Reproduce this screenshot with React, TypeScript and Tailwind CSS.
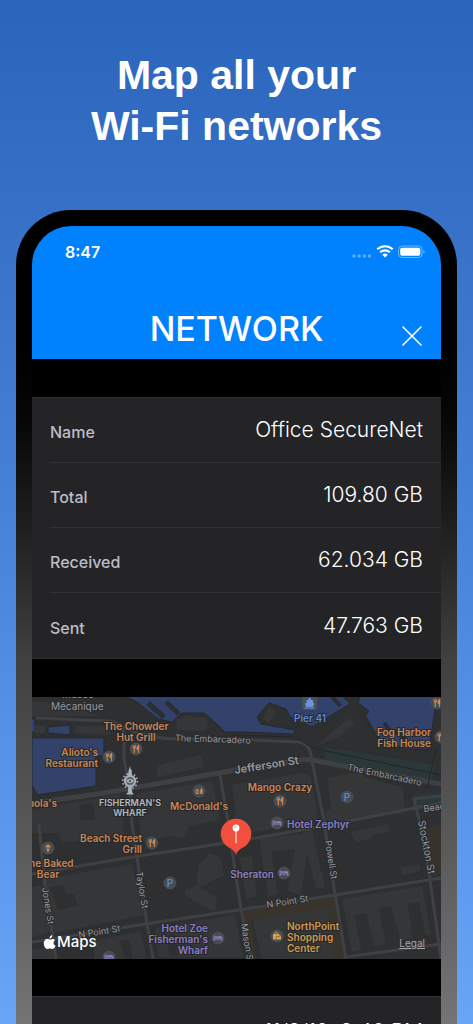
import { ReactNode } from 'react';

const rows = [
  { label: 'Name', value: 'Office SecureNet' },
  { label: 'Total', value: '109.80 GB' },
  { label: 'Received', value: '62.034 GB' },
  { label: 'Sent', value: '47.763 GB' },
];

type BadgeKind = 'food' | 'bed' | 'parking' | 'cone' | 'burger' | 'bag';

const badges: { kind: BadgeKind; x: number; y: number }[] = [
  { kind: 'food', x: 77, y: 60 },
  { kind: 'food', x: 104, y: 52 },
  { kind: 'burger', x: 167, y: 94 },
  { kind: 'food', x: 248, y: 104 },
  { kind: 'food', x: 405, y: 6 },
  { kind: 'food', x: 409, y: 40 },
  { kind: 'food', x: 120, y: 146 },
  { kind: 'cone', x: 16, y: 151 },
  { kind: 'parking', x: 315, y: 100 },
  { kind: 'parking', x: 138, y: 186 },
  { kind: 'bed', x: 245, y: 126 },
  { kind: 'bed', x: 252, y: 176 },
  { kind: 'bed', x: 186, y: 241 },
  { kind: 'bed', x: 77, y: 260 },
  { kind: 'bag', x: 245, y: 239 },
];

function BadgeGlyph({ kind }: { kind: BadgeKind }) {
  switch (kind) {
    case 'food':
      return (
        <g fill="none" stroke="#d08a56" strokeLinecap="round">
          <path d="M-2.9-3.6v2.4M-1.7-3.6v2.4M-.5-3.6v2.4" strokeWidth=".7" />
          <path d="M-2.9-1.4c0 1.4 2.4 1.4 2.4 0z" fill="#d08a56" strokeWidth=".5" />
          <path d="M-1.7-.6v4.2" strokeWidth="1.2" />
          <path d="M2.4-3.6v7.2M2.4-3.6c-1.4 1-1.6 2.6-1.4 4h1.4z" fill="#d08a56" strokeWidth="1" />
        </g>
      );
    case 'bed':
      return (
        <g fill="#8f80cc">
          <path d="M-4.4-2.8h1v3.3h6.9v-.9h.9v3.4h-1V1.600h-6.8V3h-1z" />
          <circle cx="-2" cy="-.9" r="1" />
          <path d="M-.6-1.800h3.400c.9 0 1.300.5 1.300 1.900h-4.700z" />
        </g>
      );
    case 'parking':
      return (
        <text y="4" textAnchor="middle" fontSize="10" fontWeight="600" fill="#5b86cf">P</text>
      );
    case 'cone':
      return (
        <g fill="#d08a56">
          <path d="M-2.600-.4a2.600 2.800 0 1 1 5.200 0z" />
          <path d="M-1.800.4h3.600L.3 4.200h-.6z" />
        </g>
      );
    case 'burger':
      return (
        <g fill="#d08a56">
          <path d="M-3.800-.2c0-2 4-2 4 0zM-3.900.4h4.200v.8h-4.200zM-3.800 1.700h4c0 .7-.4 1.200-1 1.200h-2c-.6 0-1-.5-1-1.200z" />
          <path d="M1-1.500h2.800L3.400 2.900h-2zM2.200-3.600h.7v2h-.7z" />
        </g>
      );
    case 'bag':
      return (
        <g>
          <path d="M-2.300-1.800c0-2.800 3.400-2.800 3.400 0" fill="none" stroke="#d9a04a" />
          <path d="M-4-1.900h6.400v1.500H4v4h-8z" fill="#d9a04a" />
          <path d="M-.8.600h4M-.8 3V.6" fill="none" stroke="#4b5256" strokeWidth=".6" />
        </g>
      );
  }
}

interface PoiProps {
  x: number;
  y: number;
  color: string;
  size?: number;
  children: ReactNode;
}

function Poi({ x, y, color, size = 10, children }: PoiProps) {
  return (
    <text x={x} y={y} fill={color} fontSize={size} fontWeight="600" stroke="#26282a" strokeWidth="2" paintOrder="stroke">
      {children}
    </text>
  );
}

const ORANGE = '#c98656';
const PURPLE = '#8a7dc4';
const BLUE = '#5f88d6';

function StreetMap() {
  return (
    <svg
      viewBox="0 0 409 262"
      preserveAspectRatio="xMidYMid slice"
      className="block w-full font-['Inter',sans-serif]"
      role="img"
      aria-label="Network location"
    >
      <rect width="409" height="262" fill="#2d2f31" />

      {/* water */}
      <g fill="#33426b" stroke="#26282b" strokeWidth="1">
        <path d="M90-2l15 7 21 17 14 3 10-9h22l14 12 7 7h17l52 2 1-4-34-6-4-7 12-14 17 6 4 8 22 10 38-23-9-9z" />
        <path d="M328-2l-2 8 11 8-5 7 13 19 28 12h24l6-40-2-14z" />
        <path d="M0 41h72v17l-8 2v29L5 98 0 88z" />
        <path d="M-1 21l4 2v12h-4zM16 30l22-2v10l-22-2z" />
      </g>
      {/* piers */}
      <g fill="none" stroke="#2b2d30" strokeWidth="5">
        <path d="M116 6l16 14M134 5l13 12" />
        <path d="M299-2l9 11M352 26l10 12M362 34l12 8M327 10l16 28" strokeWidth="4" />
      </g>

      {/* green strips along the embarcadero */}
      <path d="M293 50l110 18-4 19-106-21zM381 97l28-2v15l-28 4z" fill="#2b383a" />
      <path d="M395 130l14-3v48l-10 6z" fill="#38322c" />

      {/* building blocks */}
      <g fill="#353638">
        <path d="M3 28h10v8H3zM43 29h34l2 9-36-2zM0 4l44 6 24 9H0z" />
        <path d="M145 22l10-3 18 2 4 5-4 8-28-1zM125 68l44-10 3 12-46 10z" />
        <path d="M0 113l88-16 4 40-62 9-4-10H0zM104 97l76-13 8 39-30 6-6 12-14-2-28 6z" />
        <path d="M200 88l70-12q8 0 9 6l8 42-82 14z" />
        <path d="M296 81l34-7 1 6 40 10 2 26-78 10-2-12 6-2zM285 48l12-10 20-17 6 5-16 14-20 8z" />
        <path d="M231 22l6-12 7 4-6 12zM10 182l90-15 12 51-90 18zM0 190l8-2 10 47-18 5z" />
        <path d="M166 169l12-13 11 5 3 17-27 14zM153 193l12-5 20 13-2 15-30-18z" />
        <path d="M208 161l12-2 5 40-11 3zM228 141l43-4 5 13-7 48-14-4 8-42-33 4zM270 135l10-2 13 58-9 1z" />
        <path d="M228 148l10-1 8 50-10 3zM318 135l38-8 2 8-16 3-4 4-14 3zM369 171l18-4 2 7-19 4z" />
        <path d="M219 217l80-14 10 46-1 13h-78zM310 202l80-13 9 48-79 18zM0 253l20-4 3 13H0z" />
        <path d="M62 244l46-10 7 28H62zM123 231l80-13 8 42h-84z" />
      </g>
      <g fill="#2d2f31">
        <path d="M322 218l12-2 10 38-14 2zM347 211l12-2 10 35-15 3zM376 207l11-2 7 34-14 2z" />
        <path d="M18 190l14-2 2 9h8l3 12-19 4zM47 108l14-2 2 16-14 2zM134 238l9-1 3 22h-8zM88 244l9-2 4 20h-8z" />
      </g>
      <path d="M211 214l92-15 11 63H303l-8-52-76 13 5 39h-7z" fill="#38342b" />

      {/* streets */}
      <g fill="none" stroke="#3e4044" strokeLinecap="round">
        <path d="M5 21l72 3q14 2 15 14v24l6 31" strokeWidth="3" />
        <path d="M90 30q30 13 60 12h50l66 3q9 1 12 9l8 40 7 34" strokeWidth="3" />
        <path d="M0 106l66-9 144-25 60-9q10-1 20 2l119 22" strokeWidth="5" />
        <path d="M98 93l2 34 15 100 6 35M188 78l8 46 5 36 8 52 10 50M292 124l11 73 11 65" strokeWidth="3" />
        <path d="M0 177l107-18 93-14 93-16 94-19 22-4M0 245l113-18 94-14 96-15 106-17" strokeWidth="3" />
        <path d="M7 128l6 60 11 74M409 99l-27 3 6 25 10 55 11 80M313 260l96-13" strokeWidth="3" />
      </g>
      <path d="M200 38l62 2 22 12 125 26M404 52l-9 40" fill="none" stroke="#242628" strokeWidth="1" />

      {/* street names */}
      <g fill="#97999d" fontSize="9" stroke="#292b2d" strokeWidth="2" paintOrder="stroke">
        <text x="19" y="13" fontSize="10">Mécanique</text>
        <text x="30" y="1" fontSize="10">Musée</text>
        <text x="143" y="44" transform="rotate(2 143 44)">The Embarcadero</text>
        <text x="203" y="77" fontSize="11" fontWeight="600" transform="rotate(-9 203 77)">Jefferson St</text>
        <text x="315" y="73" transform="rotate(12 315 73)">The Embarcadero</text>
        <text x="392" y="115" transform="rotate(-8 392 115)">Beach St</text>
        <text x="47" y="241" transform="rotate(-9 47 241)">N Point St</text>
        <text x="235" y="211" transform="rotate(-9 235 211)">N Point St</text>
        <text x="10" y="191" transform="rotate(81 10 191)">Jones St</text>
        <text x="104" y="175" transform="rotate(81 104 175)">Taylor St</text>
        <text x="293" y="144" transform="rotate(81 293 144)">Powell St</text>
        <text x="386" y="124" fontSize="10" transform="rotate(79 386 124)">Stockton St</text>
        <text x="209" y="227" transform="rotate(81 209 227)">Mason St</text>
      </g>

      {/* places */}
      {badges.map((b) => (
        <g key={`${b.x}-${b.y}`} transform={`translate(${b.x} ${b.y})`}>
          <circle r="6.500" fill="#474d51" />
          <BadgeGlyph kind={b.kind} />
        </g>
      ))}
      <g textAnchor="middle">
        <Poi x={104} y={33} color={ORANGE}>The Chowder</Poi>
        <Poi x={104} y={44} color={ORANGE}>Hut Grill</Poi>
        <Poi x={167} y={113} color={ORANGE}>McDonald's</Poi>
        <Poi x={248} y={94} color={ORANGE}>Mango Crazy</Poi>
        <Poi x={16} y={170} color={ORANGE}>The Baked</Poi>
        <Poi x={16} y={181} color={ORANGE}>Bear</Poi>
        <Poi x={278} y={25} color={BLUE}>Pier 41</Poi>
        <Poi x={98} y={109} color="#b4b9c0" size={9}>FISHERMAN'S</Poi>
        <Poi x={98} y={119} color="#b4b9c0" size={9}>WHARF</Poi>
      </g>
      <g textAnchor="end">
        <Poi x={66} y={59} color={ORANGE}>Alioto's</Poi>
        <Poi x={66} y={70} color={ORANGE}>Restaurant</Poi>
        <Poi x={25} y={110} color={ORANGE}>nola's</Poi>
        <Poi x={399} y={39} color={ORANGE}>Fog Harbor</Poi>
        <Poi x={399} y={50} color={ORANGE}>Fish House</Poi>
        <Poi x={110} y={145} color={ORANGE}>Beach Street</Poi>
        <Poi x={110} y={156} color={ORANGE}>Grill</Poi>
        <Poi x={242} y={181} color={PURPLE}>Sheraton</Poi>
        <Poi x={176} y={235} color={PURPLE}>Hotel Zoe</Poi>
        <Poi x={176} y={246} color={PURPLE}>Fisherman's</Poi>
        <Poi x={176} y={257} color={PURPLE}>Wharf</Poi>
      </g>
      <Poi x={255} y={131} color={PURPLE}>Hotel Zephyr</Poi>
      <Poi x={255} y={233} color="#cf9a4c">NorthPoint</Poi>
      <Poi x={255} y={244} color="#cf9a4c">Shopping</Poi>
      <Poi x={255} y={255} color="#cf9a4c">Center</Poi>

      {/* ferry */}
      <rect x="270" y="-3" width="15" height="16" rx="3" fill="#475157" />
      <path d="M276.500 1h2.500v2h2v3l1.500.6-1.500 3.400h-6.800l-1.500-3.400 1.800-.6V3h2zM272.500 10.500h10v1h-10z" fill="#6a93dd" />

      {/* wharf wheel */}
      <g transform="translate(98 84)" fill="#a8afb7">
        <circle r="7.400" fill="none" stroke="#a8afb7" strokeWidth="1.600" strokeDasharray="1.600 2.270" />
        <circle r="6.200" />
        <circle r="3.900" fill="#5b6168" />
        <ellipse rx="3.300" ry="1.900" />
        <circle r=".9" fill="#33363a" />
        <path d="M-2-6l.6-4.500L0-15l.7 3.500h.9L2-6zM-1.600 6h3.200l.8 6h1v1.500h-6.800V12h1z" />
      </g>

      {/* pin */}
      <path d="M204 158c-1-4-4-6-8-8a15.300 15.300 0 1 1 16 0c-4 2-7 4-8 8z" fill="#f24f3e" />
      <path d="M203.500 134h1v11.500l-.5 1.200-.5-1.200z" fill="#fff" />
      <circle cx="204" cy="131" r="3.400" fill="#fff" />
      <circle cx="203" cy="130" r=".9" fill="#f8a79e" />

      {/* attribution */}
      <g fill="#fff">
        <path d="M22 247.500c-.9-1.300-.6-3.400 1.100-4.300-.9-1.200-2.500-1.400-3.600-.9-1.300.5-1.500.5-2.700 0-2.800-1-5.300 1.400-5 4.600.2 2.200 1.900 5.100 3.500 5.100 1 0 1.500-.6 2.700-.6s1.600.6 2.700.6c1.400 0 2.500-2 2.900-3.200-.6-.2-1.300-.7-1.600-1.300zM20.200 238c-1.600.3-2.800 1.900-2.600 3.500 1.500 0 2.800-1.700 2.600-3.500z" />
        <text x="25" y="250" fontSize="15" fontWeight="500">Maps</text>
      </g>
    </svg>
  );
}

function StatusBar() {
  return (
    <div className="flex items-center justify-between pt-4 pr-4 pl-[33px]">
      <span className="text-[16px] leading-5 font-semibold">8:47</span>
      <svg width="74" height="16" viewBox="0 0 74 16" aria-hidden="true">
        <g fill="#5aaeff">
          <circle cx="3" cy="12" r="1.700" />
          <circle cx="8.200" cy="12" r="1.700" />
          <circle cx="13.300" cy="12" r="1.700" />
          <circle cx="18.500" cy="12" r="1.700" />
        </g>
        <g fill="none" stroke="#fff" strokeWidth="2.200">
          <path d="M26.300 5.300a11.200 11.200 0 0 1 15.400 0" />
          <path d="M29.100 8.300a7.200 7.200 0 0 1 9.800 0" />
        </g>
        <path d="M31.300 10.700a3.900 3.900 0 0 1 5.400 0L34 13.500z" fill="#fff" />
        <rect x="47.500" y="2" width="23.500" height="11.500" rx="3.500" fill="none" stroke="#6cb6ff" />
        <rect x="49.200" y="3.700" width="20.100" height="8.100" rx="1.800" fill="#fff" />
        <path d="M72.500 6c1.400.5 1.400 3 0 3.500z" fill="#8ac4ff" />
      </svg>
    </div>
  );
}

export default function App() {
  return (
    <main className="flex h-screen flex-col overflow-hidden bg-linear-to-b from-[#2b64bb] via-[#4682d8] to-[#68a5f7] px-4 font-['Inter',sans-serif] text-white">
      <h1 className="mt-[50px] mb-[58px] text-center font-['Liberation_Sans',sans-serif] text-[41px] leading-[51px] font-bold">
        Map all your
        <br />
        Wi-Fi networks
      </h1>

      <div className="min-h-0 flex-1 rounded-t-[55px] bg-linear-to-b from-black from-10% via-[#404040] via-55% to-[#747474] px-4 pt-4">
        <div className="h-full overflow-hidden rounded-t-[39px] bg-black">
          <header className="bg-[#0082ff] pb-[3px]">
            <StatusBar />
            <div className="mt-10 grid grid-cols-[1fr_auto_1fr] items-end">
              <h2 className="col-start-2 text-[34px] leading-[54px] font-medium">NETWORK</h2>
              <button type="button" aria-label="Close" className="mr-[18px] mb-[9px] justify-self-end">
                <svg width="22" height="22" viewBox="0 0 22 22" fill="none" stroke="#fff" strokeWidth="1.600" strokeLinecap="round">
                  <path d="M2 2l18 18M20 2L2 20" />
                </svg>
              </button>
            </div>
          </header>

          <dl className="mt-[38px] border-y border-[#303033] bg-[#242426] pl-[18px]">
            {rows.map((row) => (
              <div
                key={row.label}
                className="flex h-[65px] items-center justify-between border-b border-[#323235] pr-[18px] last:border-b-0"
              >
                <dt className="pt-1 text-[16px] leading-6 font-medium text-[#bdbdc6]">{row.label}</dt>
                <dd className="text-[21px] leading-7 font-light">{row.value}</dd>
              </div>
            ))}
          </dl>

          <section className="relative mt-[38px]">
            <StreetMap />
            <a href="#legal" className="absolute right-4 bottom-2 text-[10px] leading-4 text-[#a5a6a8] underline">
              Legal
            </a>
          </section>

          <section className="mt-[37px] border-t border-[#303033] bg-[#242426] px-[18px] pt-[21px] pb-5 text-right text-[21px] leading-7 font-light">
            11/8/19, 8:40 PM
          </section>
        </div>
      </div>
    </main>
  );
}
